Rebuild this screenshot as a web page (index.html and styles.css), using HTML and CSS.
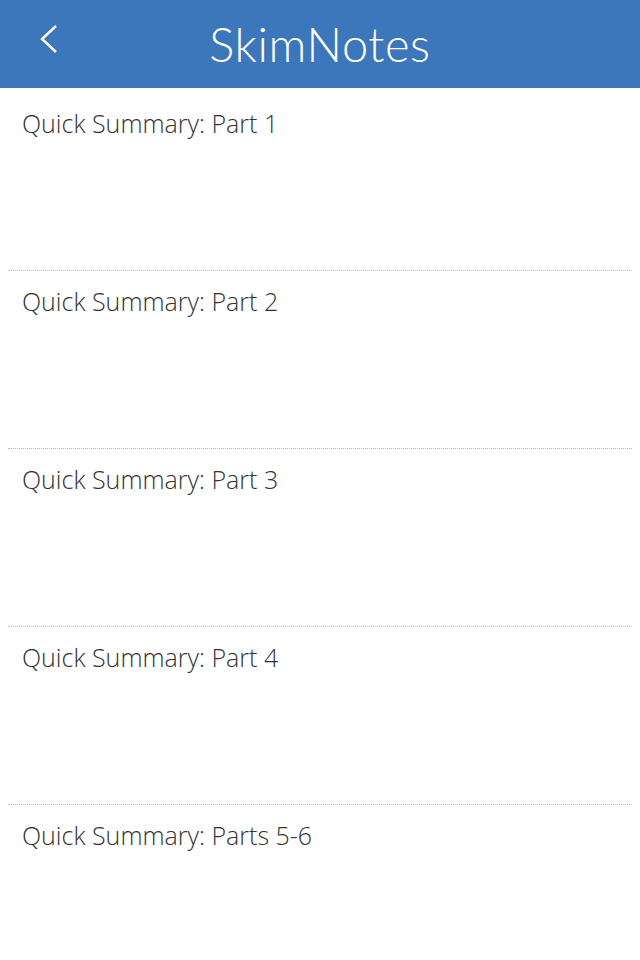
FILE: index.html
```html
<!DOCTYPE html>
<html lang="en">
<head>
    <meta charset="UTF-8">
    <meta name="viewport" content="width=device-width, initial-scale=1.0">
    <title>SkimNotes</title>
    <link rel="stylesheet" href="styles.css">
</head>
<body>
<div class="header">
    <span class="back">
        <svg width="20" height="30" viewBox="0 0 20 30"><path d="M18 2 L4 15 L18 28" fill="none" stroke="#fff" stroke-width="2.4"/></svg>
    </span>
    <h1>SkimNotes</h1>
</div>

<div class="list">
    <div class="item">Quick Summary: Part 1</div>
    <div class="item">Quick Summary: Part 2</div>
    <div class="item">Quick Summary: Part 3</div>
    <div class="item">Quick Summary: Part 4</div>
    <div class="item">Quick Summary: Parts 5-6</div>
</div>
</body>
</html>
```

FILE: styles.css
```css
body {
    margin: 0;
    font-family: "Open Sans", "Noto Sans", sans-serif;
    background-color: white;
}

.header {
    height: 88px;
    background-color: #3d77bb;
    display: flex;
    align-items: center;
    justify-content: center;
    position: relative;
}

.header h1 {
    margin: 0;
    color: white;
    font-family: Lato, sans-serif;
    font-weight: 300;
    font-size: 47px;
    letter-spacing: 0.6px;
}

.back {
    position: absolute;
    left: 38px;
    top: 24px;
}

.list {
    padding: 5px 8px 0;
}

.item {
    height: 178px;
    border-bottom: 1px dotted #bcbcbc;
    padding: 13px 14px 0;
    box-sizing: border-box;
    font-size: 25px;
    font-weight: 300;
    color: #333;
}

.item:last-child {
    border-bottom: none;
}
```
